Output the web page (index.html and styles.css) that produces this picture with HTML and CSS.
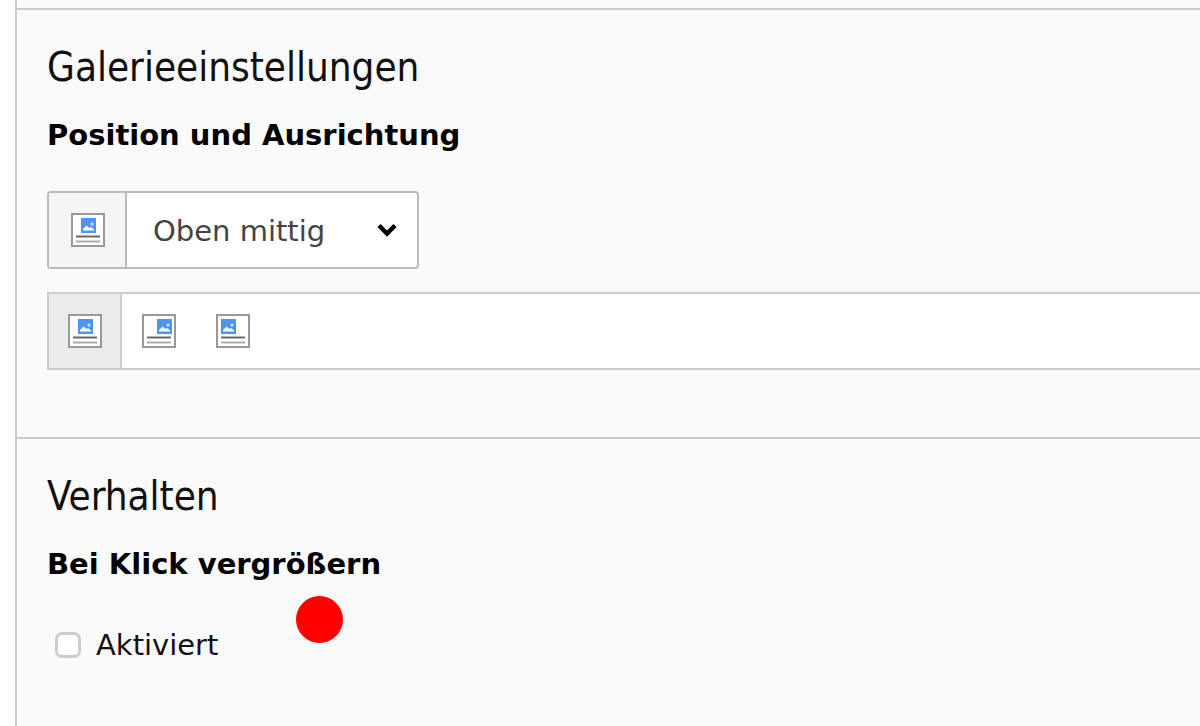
FILE: index.html
```html
<!DOCTYPE html>
<html lang="de">
<head>
<meta charset="utf-8">
<meta name="viewport" content="width=device-width, initial-scale=1">
<title>Galerieeinstellungen</title>
<link rel="stylesheet" href="styles.css">
</head>
<body>
<svg class="defs" aria-hidden="true">
  <symbol id="frame" viewBox="0 0 34 34">
    <rect x="1" y="1" width="32" height="32" fill="#fff" stroke="#999" stroke-width="2"/>
    <path d="M5 23.5h24" stroke="#666" stroke-width="2"/>
    <path d="M5 28.5h24" stroke="#aaa" stroke-width="2"/>
  </symbol>
  <symbol id="photo" viewBox="0 0 15 15">
    <path d="M0 0h15v15H0z" fill="#4d94f7"/>
    <path d="M2 12.5V11l3.500-3.500 3 2.500 1.500-1 3 2.500v1z" fill="#fff"/>
    <circle cx="11" cy="6" r="1.500" fill="#d5e6ff"/>
  </symbol>
</svg>
<main class="panel">
  <form>
    <section class="section">
      <h2 class="title">Galerieeinstellungen</h2>
      <label class="label" for="position">Position und Ausrichtung</label>
      <div class="picker">
        <span class="addon">
          <svg class="icon" viewBox="0 0 34 34" aria-hidden="true"><use href="#frame" width="34" height="34"/><use href="#photo" x="10" y="5" width="15" height="15"/></svg>
        </span>
        <span class="select-box">
          <select class="select" id="position">
            <option>Oben mittig</option>
            <option>Oben rechts</option>
            <option>Oben links</option>
          </select>
          <svg class="chevron" viewBox="0 0 20 14" aria-hidden="true"><path d="M2 2.500l8 8 8-8" fill="none" stroke="#000" stroke-width="4.500"/></svg>
        </span>
      </div>
      <div class="options">
        <button class="option active" type="button" aria-label="Oben mittig">
          <svg class="icon" viewBox="0 0 34 34" aria-hidden="true"><use href="#frame" width="34" height="34"/><use href="#photo" x="10" y="5" width="15" height="15"/></svg>
        </button>
        <button class="option" type="button" aria-label="Oben rechts">
          <svg class="icon" viewBox="0 0 34 34" aria-hidden="true"><use href="#frame" width="34" height="34"/><use href="#photo" x="15" y="5" width="15" height="15"/></svg>
        </button>
        <button class="option" type="button" aria-label="Oben links">
          <svg class="icon" viewBox="0 0 34 34" aria-hidden="true"><use href="#frame" width="34" height="34"/><use href="#photo" x="5" y="5" width="15" height="15"/></svg>
        </button>
      </div>
    </section>
    <section class="section">
      <h2 class="title">Verhalten</h2>
      <div class="label">Bei Klick vergrößern</div>
      <div class="check-row">
        <input class="check" type="checkbox" id="enabled">
        <label for="enabled">Aktiviert</label>
        <span class="marker"></span>
      </div>
    </section>
  </form>
</main>
</body>
</html>
```
FILE: styles.css
```css
* {
  box-sizing: border-box;
}

body {
  margin: 0;
  background: #fff;
  color: #111;
  font-family: "DejaVu Sans", sans-serif;
  font-size: 29px;
  line-height: 36px;
}

.defs {
  position: absolute;
  width: 0;
  height: 0;
}

.panel {
  min-height: 100vh;
  margin-left: 15px;
  padding-top: 8px;
  border-left: 2px solid #ccc;
  background: #fafafa;
  overflow: hidden;
}

.section {
  padding: 33px 0 67px 30px;
  border-top: 2px solid #ccc;
}

.title {
  margin: 0;
  font-family: "DejaVu Sans Condensed", "DejaVu Sans", sans-serif;
  font-size: 40px;
  font-weight: 400;
  line-height: 48px;
}

.label {
  display: block;
  margin-top: 26px;
  color: #000;
  font-weight: 700;
}

.picker {
  display: flex;
  width: fit-content;
  margin-top: 38px;
  border: 2px solid #bbb;
  border-radius: 4px;
  background: #fff;
}

.addon {
  display: flex;
  align-items: center;
  padding: 0 20px 0 22px;
  border-right: 2px solid #bbb;
  background: #f5f5f5;
}

.icon {
  display: block;
  width: 34px;
  height: 34px;
}

.select-box {
  display: grid;
  align-items: center;
}

.select {
  grid-area: 1 / 1;
  width: 290px;
  height: 74px;
  padding: 2px 60px 0 26px;
  border: 0;
  background: transparent;
  color: #444;
  font: inherit;
  appearance: none;
}

.chevron {
  grid-area: 1 / 1;
  justify-self: end;
  width: 20px;
  height: 14px;
  margin-right: 20px;
  pointer-events: none;
}

.options {
  display: flex;
  margin-top: 23px;
  border: 2px solid #ccc;
  border-right: 0;
  background: #fff;
}

.option {
  height: 74px;
  padding: 0 20px;
  border: 0;
  background: transparent;
}

.option.active {
  padding-right: 18px;
  padding-left: 19px;
  border-right: 2px solid #ccc;
  background: #ebebeb;
}

.check-row {
  display: flex;
  align-items: center;
  margin-top: 45px;
  padding-left: 8px;
  position: relative;
}

.check {
  width: 26px;
  height: 26px;
  margin: 0 15px 0 0;
  border: 3px solid #ccc;
  border-radius: 7px;
  background: #fff;
  appearance: none;
}

.marker {
  position: absolute;
  left: 249px;
  top: -31px;
  width: 47px;
  height: 47px;
  border-radius: 50%;
  background: #f00;
}
```
